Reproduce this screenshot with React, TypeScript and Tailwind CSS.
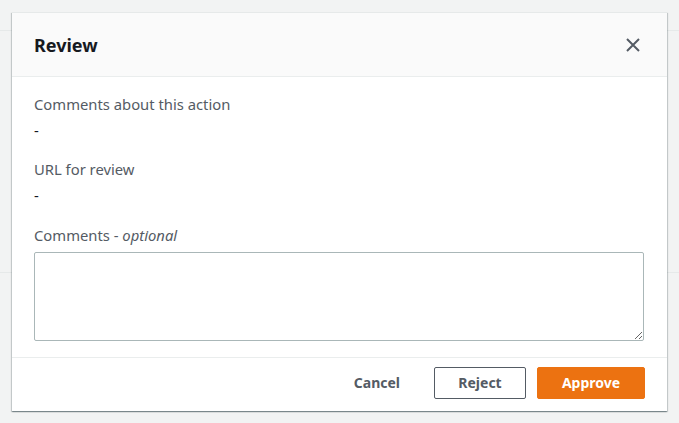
import React from "react";

export default function App() {
  return (
    <div
      className="relative h-[423px] w-[679px] overflow-hidden bg-[#f2f3f3]"
      style={{ fontFamily: '"Noto Sans", "Open Sans", Arial, sans-serif' }}
    >
      {/* faint page behind the modal */}
      <div className="absolute left-0 right-0 top-[30px] h-[243px] border-y border-[#e6e9e9] bg-[#f2f3f3]" />

      <div className="relative ml-[12px] mt-[12px] w-[655px] border-t border-[#e6e9e9] bg-white shadow-[0_1px_1px_0_rgba(0,28,36,0.3),1px_1px_1px_0_rgba(0,28,36,0.15),-1px_1px_1px_0_rgba(0,28,36,0.15)]">
        <div className="flex h-[64px] items-center justify-between border-b border-[#eaeded] bg-[#fafafa] pl-[22px] pr-[24px]">
          <h2 className="text-[18px] font-bold leading-[22px] text-[#16191f]">Review</h2>
          <button className="flex h-[20px] w-[20px] items-center justify-center text-[#545b64]">
            <svg width="16" height="16" viewBox="0 0 16 16" fill="none">
              <path d="M2 2l12 12M14 2L2 14" stroke="currentColor" strokeWidth="2" />
            </svg>
          </button>
        </div>

        <div className="flex flex-col px-[22px] pb-[16px] pt-[16px] text-[14.8px] leading-[22px]">
          <div className="flex flex-col">
            <span className="text-[#545b64]">Comments about this action</span>
            <span className="mt-[4px] text-[#16191f]">-</span>
          </div>
          <div className="mt-[17px] flex flex-col">
            <span className="text-[#545b64]">URL for review</span>
            <span className="mt-[4px] text-[#16191f]">-</span>
          </div>
          <div className="mt-[18px] flex flex-col">
            <span className="text-[#545b64]">
              Comments - <i>optional</i>
            </span>
            <textarea className="mt-[6px] h-[89px] w-[610px] rounded-[2px] border border-[#aab7b8] bg-white px-[10px] py-[4px] text-[14px] text-[#16191f] outline-none" />
          </div>
        </div>

        <div className="flex items-center justify-end border-t border-[#eaeded] pb-[12px] pl-[22px] pr-[22px] pt-[9px] text-[14px] font-bold leading-[22px]">
          <button className="mr-[14px] h-[32px] px-[20px] text-[#545b64]">Cancel</button>
          <button className="mr-[11px] h-[32px] w-[92px] rounded-[2px] border border-[#545b64] bg-white text-[#545b64]">
            Reject
          </button>
          <button className="h-[32px] w-[108px] rounded-[2px] border border-[#ec7211] bg-[#ec7211] text-white">
            Approve
          </button>
        </div>
      </div>
    </div>
  );
}
